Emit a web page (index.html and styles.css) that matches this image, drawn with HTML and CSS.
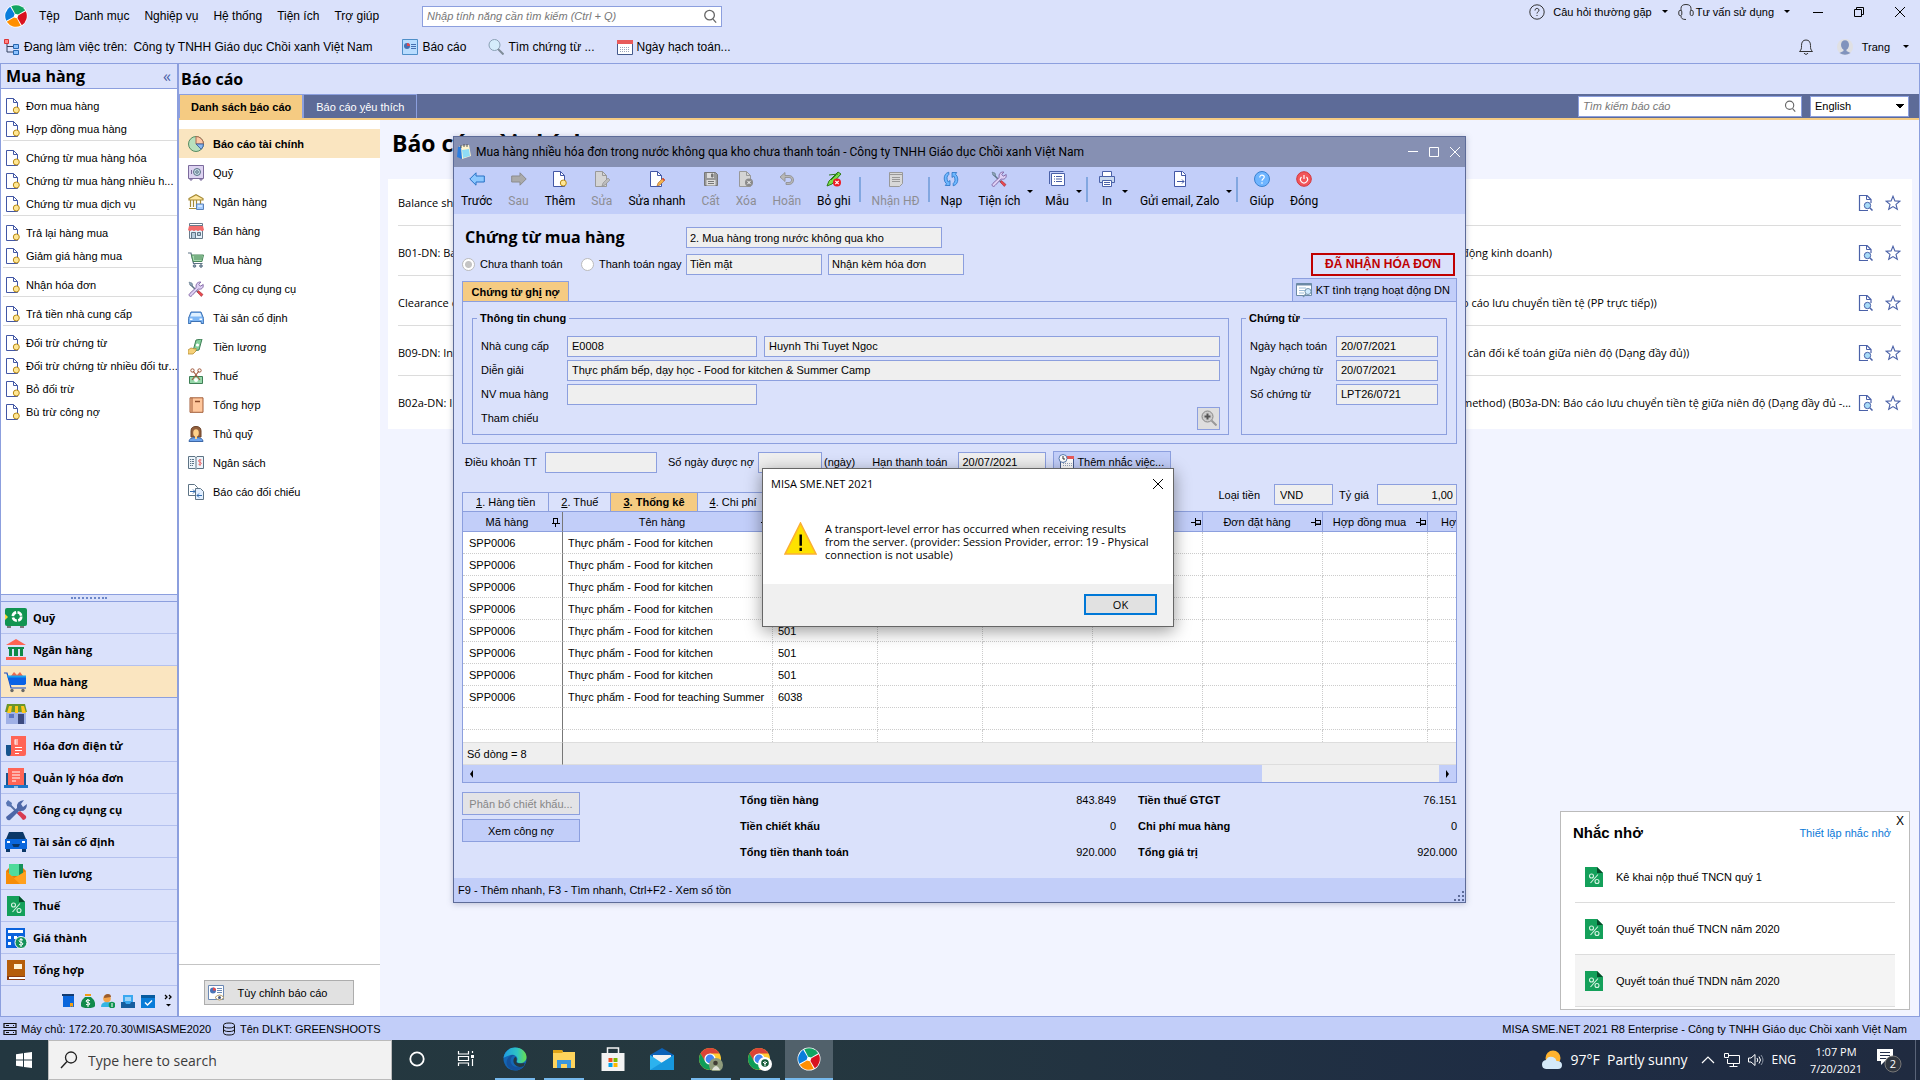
FILE: index.html
```
<!DOCTYPE html>
<html lang="vi">
<head>
    <meta charset="UTF-8">
    <meta name="viewport" content="width=device-width, initial-scale=1.0">
    <title>MISA SME.NET 2021</title>
    <link rel="stylesheet" href="styles.css">
</head>
<body>
    <!-- shared icons -->
    <svg class="sprite" aria-hidden="true">
        <symbol id="logo" viewBox="0 0 24 24">
            <circle cx="12" cy="12" r="11.5" fill="#fff"/>
            <path d="M4.5 4.2A11 11 0 0 1 19 3.6L13.5 10L10.5 10Z" fill="#12a563" transform="rotate(18 12 12)"/>
            <path d="M4.5 4.2A11 11 0 0 1 19 3.6L13.5 10L10.5 10Z" fill="#d9121f" transform="rotate(108 12 12)"/>
            <path d="M4.5 4.2A11 11 0 0 1 19 3.6L13.5 10L10.5 10Z" fill="#ff8f00" transform="rotate(198 12 12)"/>
            <path d="M4.5 4.2A11 11 0 0 1 19 3.6L13.5 10L10.5 10Z" fill="#0a7ddc" transform="rotate(288 12 12)"/>
        </symbol>
        <symbol id="search" viewBox="0 0 16 16"><g fill="none" stroke="#666" stroke-width="1.5"><circle cx="7.5" cy="7" r="5.5"/><path d="M11.5 11.5L15 15.5"/></g></symbol>
        <symbol id="tree" viewBox="0 0 16 16"><path d="M3 4V13H9M3 7.500H9" fill="none" stroke="#33415f"/><path d="M.5.5h4v4h-4z" fill="#ff8585" stroke="#d33"/><path d="M9.500 5.500h5v4h-5zM9.500 11.500h5v4h-5z" fill="#8cc2ff" stroke="#2767b0"/></symbol>
        <symbol id="report" viewBox="0 0 16 16"><path d="M.5.5h15v15H.5z" fill="#b9ddff" stroke="#4f8fc8"/><circle cx="5" cy="7" r="3" fill="#466fb0"/><path d="M5 4a3 3 0 0 1 3 3H5z" fill="#e5474b"/><path d="M9 5.500h5M9 7.500h5M9 9.500h5" stroke="#466fb0"/></symbol>
        <symbol id="find" viewBox="0 0 16 16"><circle cx="6.500" cy="6" r="5.500" fill="#d5ecfb" stroke="#8aa0b4"/><path d="M10 10l5.500 5.500" stroke="#7f8c99" stroke-width="2"/></symbol>
        <symbol id="cal" viewBox="0 0 16 16"><path d="M.5 1.500h15v14H.5z" fill="#fff" stroke="#445a8c"/><path d="M0 1h16v4H0z" fill="#e85a5a"/><path d="M3 8.500h10M3 10.500h10M3 12.500h10" stroke="#9aa5bd" stroke-dasharray="1 1"/></symbol>
        <symbol id="doc" viewBox="0 0 16 16"><path d="M1.500.5h7l4 4v11h-11z" fill="#fff" stroke="#4257a5"/><path d="M8.500.5v4h4" fill="none" stroke="#4257a5"/><circle cx="11.300" cy="12" r="3" fill="#ffe794" stroke="#b98a16"/></symbol>
        <symbol id="docedit" viewBox="0 0 16 16"><path d="M1.500.5h7l4 4v11h-11z" fill="#fff" stroke="#4257a5"/><path d="M8.500.5v4h4" fill="none" stroke="#4257a5"/><path d="M8 15l1-3 5-5 2 2-5 5z" fill="#f2b24c" stroke="#a8652b" stroke-width=".6"/><path d="M13 8l1-1 2 2-1 1z" fill="#d7403c"/></symbol>
        <symbol id="docgrey" viewBox="0 0 16 16"><path d="M1.500.5h7l4 4v11h-11z" fill="#d4d4d4" stroke="#999"/><path d="M8.500.5v4h4" fill="none" stroke="#999"/><path d="M8 15l1-3 5-5 2 2-5 5z" fill="#bbb" stroke="#8b8b8b" stroke-width=".6"/></symbol>
        <symbol id="docdel" viewBox="0 0 16 16"><path d="M1.500.5h7l4 4v11h-11z" fill="#d4d4d4" stroke="#999"/><path d="M8.500.5v4h4" fill="none" stroke="#999"/><circle cx="11" cy="11.500" r="4" fill="#8a8a8a"/><path d="M9.300 9.800l3.400 3.400M12.700 9.800l-3.400 3.400" stroke="#fff"/></symbol>
        <symbol id="docfind" viewBox="0 0 16 16"><path d="M13 8V4.500l-4-4H1.500v15H10" fill="#fff" stroke="#4a61a8" stroke-width="1.200"/><path d="M8.500.5v4h4.500" fill="none" stroke="#4a61a8"/><circle cx="9.500" cy="10.500" r="3.200" fill="#a9dcf7" stroke="#4a61a8"/><path d="M12 13l2.500 2.500" stroke="#4a61a8" stroke-width="1.500"/></symbol>
        <symbol id="star" viewBox="0 0 16 16"><path d="M8 1.200l1.900 4.700 5 .3-3.900 3.200 1.300 4.900L8 11.600l-4.300 2.700L5 9.400 1.100 6.200l5-.3z" fill="#fff" stroke="#4a61a8" stroke-width="1.100"/></symbol>
        <symbol id="arrow" viewBox="0 0 8 8"><path d="M1 2h6L4 5z" fill="#000"/></symbol>
        <symbol id="pin" viewBox="0 0 10 10"><path d="M2.500 1v5M6.500 1v5M2 1.500h5M1 6.500h8M4.500 6v4" fill="none" stroke="#000"/><path d="M6 1h1v5H6z"/></symbol>
        <symbol id="pinside" viewBox="0 0 10 10"><path d="M0 5.500h4M4.500 1v8M5 3.500h5M9.500 3v5M5 7.500h5" fill="none" stroke="#000"/><path d="M5 6.500h4v1H5z"/></symbol>
        <symbol id="tax" viewBox="0 0 18 20"><path d="M0 0h12l6 6v14H0z" fill="#14a05a"/><path d="M12 0l6 6h-6z" fill="#064d2a"/><g fill="none" stroke="#d8f3e3" stroke-width="1.100"><circle cx="6.500" cy="9" r="2"/><circle cx="12" cy="14.500" r="2"/><path d="M13 7.500L5.500 16"/></g></symbol>
        <symbol id="tools" viewBox="0 0 16 16"><path d="M2 3l9 9" stroke="#5d7385" stroke-width="1.500"/><path d="M1 1l3 1 .8 2L4 5l-2-.8z" fill="#8aa2b5" stroke="#5d7385" stroke-width=".5"/><path d="M10.500 9.500l4.500 4-1.700 2-4-4.300z" fill="#e8494e" stroke="#a52b35" stroke-width=".6"/><path d="M2 15.300c-1.500-.8-1.200-2 0-3L8.200 6.500C7.500 3 9.500.8 12.800 1L10.800 3.500l1.500 1.700 2.900-1.700c.5 3.500-1.700 5.300-5 4.500L4 14.500c-.7.8-1.400 1.200-2 .8z" fill="#ded0f4" stroke="#7b5f9f" stroke-width=".9"/></symbol>
        <symbol id="car" viewBox="0 0 16 16"><path d="M3 2h10l2 5 .7 1.500v5h-2.500v-2H2.800v2H.3v-5L1 7z" fill="#7eb7f5" stroke="#2f65ac" stroke-width=".9"/><path d="M3.700 3h8.600l1.300 3.500H2.400z" fill="#dff0ff"/><path d="M2 8.500h2.500v1.500H2zM11.500 8.500H14v1.500h-2.500z" fill="#fff"/></symbol>
        <symbol id="warning" viewBox="0 0 32 32"><path d="M16 1l15 30H1z" fill="#fde100" stroke="#fbb034" stroke-width="1.500"/><path d="M15 12h2.400v11H15zM15 25h2.400v3H15z"/></symbol>
    </svg>

    <header class="topbar">
        <div class="toprow">
            <svg class="logo"><use href="#logo"/></svg>
            <nav class="menu">
                <a href="#">Tệp</a><a href="#">Danh mục</a><a href="#">Nghiệp vụ</a><a href="#">Hệ thống</a><a href="#">Tiện ích</a><a href="#">Trợ giúp</a>
            </nav>
            <div class="searchbox main-search">
                <input type="text" placeholder="Nhập tính năng cần tìm kiếm (Ctrl + Q)" aria-label="Tìm tính năng">
                <svg class="i14"><use href="#search"/></svg>
            </div>
            <div class="help-links">
                <svg class="i16" viewBox="0 0 16 16"><g fill="none" stroke="#333"><circle cx="8" cy="8" r="7.200"/><path d="M6 6.500c0-3 4-2.500 4-.3C10 7.800 8 7.700 8 9.500M8 11v1"/></g></svg>
                <a href="#">Câu hỏi thường gặp</a><svg class="i8"><use href="#arrow"/></svg>
                <svg class="i16 headset" viewBox="0 0 16 16"><g fill="none" stroke="#333"><path d="M3 7V4.500C3 2 4.500.5 8 .5s5 1.500 5 4V7"/><rect x=".8" y="6.500" width="3" height="5" rx="1.300"/><rect x="12.200" y="6.500" width="3" height="5" rx="1.300"/><path d="M3 12c0 2.500 1.500 3.500 5 3.500"/></g></svg>
                <a href="#">Tư vấn sử dụng</a><svg class="i8"><use href="#arrow"/></svg>
            </div>
            <div class="window-buttons">
                <button aria-label="Thu nhỏ"><svg class="i10" viewBox="0 0 10 10"><path d="M0 5.500h10" stroke="#000"/></svg></button>
                <button aria-label="Khôi phục"><svg class="i10" viewBox="0 0 10 10"><path d="M.5 2.500h7v7h-7zM2.500 2.500v-2h7v7h-2" fill="none" stroke="#000"/></svg></button>
                <button aria-label="Đóng"><svg class="i10" viewBox="0 0 10 10"><path d="M0 0l10 10M10 0L0 10" stroke="#000"/></svg></button>
            </div>
        </div>
        <div class="toprow second">
            <svg class="i16"><use href="#tree"/></svg>
            <span class="working">Đang làm việc trên:</span><span class="company">Công ty TNHH Giáo dục Chồi xanh Việt Nam</span>
            <a href="#" class="quick"><svg class="i16"><use href="#report"/></svg>Báo cáo</a>
            <a href="#" class="quick"><svg class="i16"><use href="#find"/></svg>Tìm chứng từ ...</a>
            <a href="#" class="quick"><svg class="i16"><use href="#cal"/></svg>Ngày hạch toán...</a>
            <div class="user">
                <svg class="i16" viewBox="0 0 16 16"><path d="M1.500 12.500c2-2 2-3 2-6C3.500 3 5 1 8 1s4.500 2 4.500 5.500c0 3 0 4 2 6zM6 14c1 1.800 3 1.800 4 0" fill="none" stroke="#333"/></svg>
                <svg class="i16" viewBox="0 0 16 16"><circle cx="8" cy="8" r="8" fill="#e0e0e3"/><ellipse cx="8" cy="6" rx="4" ry="4.800" fill="#8193bd"/><path d="M6.500 9h3v3l4 2q-5.500 3.500-11 0l4-2z" fill="#8193bd"/></svg>
                <span>Trang</span><svg class="i8"><use href="#arrow"/></svg>
            </div>
        </div>
    </header>

    <main class="workspace">
        <aside class="sidebar">
            <h2 class="side-title">Mua hàng <button aria-label="Thu gọn">«</button></h2>
            <div class="side-links">
                <div class="group">
                    <a href="#"><svg class="i16"><use href="#doc"/></svg>Đơn mua hàng</a>
                    <a href="#"><svg class="i16"><use href="#doc"/></svg>Hợp đồng mua hàng</a>
                </div>
                <div class="group">
                    <a href="#"><svg class="i16"><use href="#doc"/></svg>Chứng từ mua hàng hóa</a>
                    <a href="#"><svg class="i16"><use href="#doc"/></svg>Chứng từ mua hàng nhiều h...</a>
                    <a href="#"><svg class="i16"><use href="#doc"/></svg>Chứng từ mua dịch vụ</a>
                </div>
                <div class="group">
                    <a href="#"><svg class="i16"><use href="#doc"/></svg>Trả lại hàng mua</a>
                    <a href="#"><svg class="i16"><use href="#doc"/></svg>Giảm giá hàng mua</a>
                </div>
                <div class="group">
                    <a href="#"><svg class="i16"><use href="#doc"/></svg>Nhận hóa đơn</a>
                </div>
                <div class="group">
                    <a href="#"><svg class="i16"><use href="#doc"/></svg>Trả tiền nhà cung cấp</a>
                </div>
                <div class="group">
                    <a href="#"><svg class="i16"><use href="#doc"/></svg>Đối trừ chứng từ</a>
                    <a href="#"><svg class="i16"><use href="#doc"/></svg>Đối trừ chứng từ nhiều đối tư...</a>
                    <a href="#"><svg class="i16"><use href="#doc"/></svg>Bỏ đối trừ</a>
                    <a href="#"><svg class="i16"><use href="#doc"/></svg>Bù trừ công nợ</a>
                </div>
            </div>
            <div class="splitter"><span></span></div>
            <nav class="modules">
                <a href="#"><svg viewBox="0 0 24 22"><path d="M3 18h4v3H3zM16 18h4v3h-4z" fill="#777"/><rect x="1" y="1" width="22" height="18" rx="2" fill="#119451"/><path d="M1 7l3 3-3 3z" fill="#ffd83b"/><circle cx="13" cy="9.500" r="4.200" fill="none" stroke="#fff" stroke-width="2.600" stroke-dasharray="5.200 1.400"/></svg>Quỹ</a>
                <a href="#"><svg viewBox="0 0 24 22"><path d="M12 0l10 6H2zM2 18h20v3H2z" fill="#ff6352"/><path d="M4 8h16v2h-1v7h-3v-7h-2v7h-4v-7H8v7H5v-7H4z" fill="#0e8a48"/></svg>Ngân hàng</a>
                <a href="#" class="active"><svg viewBox="0 0 24 22"><path d="M7 5l3-4 3 3 3-3 3 4z" fill="#ec6a4f"/><path d="M0 2h3l4 15h15" fill="none" stroke="#1a4ec0" stroke-width="1.200"/><path d="M3.500 5H22v8l-1.500 1H6.500z" fill="#0a62e6"/><path d="M3 4.500h19v2H3.600z" fill="#18a0ee"/><circle cx="8" cy="19.500" r="1.700" fill="#666"/><circle cx="19" cy="19.500" r="1.700" fill="#666"/></svg>Mua hàng</a>
                <a href="#"><svg viewBox="0 0 24 22"><path d="M2 8h20v13H2z" fill="#9fb0e6"/><path d="M14 11h6v10h-6z" fill="#3b4a80"/><path d="M5 11h5v4H5z" fill="#5c76c5"/><path d="M3 1h18l2 8H1z" fill="#6b962b"/><path d="M5 3h3L7 10H3zM11 3h3v7h-3zM17 3h3l2 7h-4z" fill="#ffc61a"/></svg>Bán hàng</a>
                <a href="#"><svg viewBox="0 0 24 22"><path d="M2 10h6v11H4q-2 0-2-3z" fill="#17558e"/><path d="M7 1h15v18q0 2-2 2H5q2 0 2-3z" fill="#ff6455"/><path d="M11 5h3M11 7h3M11 9h3M11 4.500v5M11 12.500h7M11 15.500h7M11 18.500h4" stroke="#fff" fill="none"/></svg>Hóa đơn điện tử</a>
                <a href="#"><svg viewBox="0 0 24 22"><path d="M2 6h20v13H2z" fill="#17558e"/><path d="M0 18h24v3H0z" fill="#1b76c9"/><path d="M4 1h16v17H4z" fill="#ff6455"/><path d="M8 5h8M8 8h8M8 11h8M8 14h4M10 20h4" stroke="#fff"/></svg>Quản lý hóa đơn</a>
                <a href="#"><svg viewBox="0 0 24 22"><path d="M3 3l13 13" stroke="#5670a6" stroke-width="2"/><path d="M2 4l2-3 4 3-1 4-4-1z" fill="#5a78b5"/><path d="M13 14l3-2 6 5q1 3-3 4z" fill="#d83b52"/><path d="M2 18L13 9q-1-7 7-8l-3 4 2 3 4-3q0 8-8 7L6 21q-3 1-4-3z" fill="#4d67a8"/></svg>Công cụ dụng cụ</a>
                <a href="#"><svg viewBox="0 0 24 22"><path d="M5 1h14l3 7H2z" fill="#0b3767"/><path d="M1 8h22v10H1z" fill="#0a66dc"/><path d="M2 18h4v3H2zM18 18h4v3h-4z" fill="#0b3767"/><path d="M8 13h8l-1.500 3h-5z" fill="#0b3767"/><path d="M3 10h3v2H3zM18 10h3v2h-3z" fill="#fff"/></svg>Tài sản cố định</a>
                <a href="#"><svg viewBox="0 0 24 22"><path d="M2 8l3-3h14l3 3v12H2z" fill="#e37b0b"/><path d="M5 1h14v12H5z" fill="#4fdb9c"/><path d="M15 1h4v12h-4z" fill="#15915a"/><path d="M2 8l8 7 12-7v13H2z" fill="#ffa11f"/><path d="M2 8l14 13H2z" fill="#f68d08"/></svg>Tiền lương</a>
                <a href="#"><svg viewBox="-3 -1 24 22"><use href="#tax" width="18" height="20"/></svg>Thuế</a>
                <a href="#"><svg viewBox="0 0 24 22"><path d="M2 1h19v20H2z" fill="#0a62dc"/><path d="M4 3h15v3H4zM4 9h3v3H4zM10 9h3v3h-3zM4 15h3v3H4z" fill="#fff"/><circle cx="17" cy="15.500" r="6" fill="#14915a" stroke="#fff"/><path d="M19 13q-4-1.500-4 .7c0 2 4 1.300 4 3.300q-1 2-4 .5M17 11v9" fill="none" stroke="#fff"/></svg>Giá thành</a>
                <a href="#"><svg viewBox="0 0 24 22"><path d="M3 1h18v20H3z" fill="#8b3d12"/><path d="M3 1h18v16H3z" fill="#b55e0b"/><path d="M10 5h8v5h-8z" fill="#fff3d7"/><path d="M5 18h16v2H5z" fill="#fff"/></svg>Tổng hợp</a>
            </nav>
            <div class="module-more">
                <svg viewBox="0 0 14 14"><path d="M2 1h11v12H2z" fill="#0a66dc"/><path d="M1 0h12v2H1z" fill="#123a70"/><path d="M9 9h3v4l-1.500-1L9 13z" fill="#f3a013"/></svg>
                <svg viewBox="0 0 14 14"><path d="M4 0h6v2H4z" fill="#f39b13"/><path d="M4 3h6q5 4 4 9-1 2-7 2t-7-2q-1-5 4-9z" fill="#118a4a"/><path d="M9 6.500q-4-1.500-4 .5c0 2 4 1.300 4 3q-1 1.500-4 .5M7 5v8" fill="none" stroke="#fff"/></svg>
                <svg viewBox="0 0 14 14"><path d="M0 13q0-5 6-5t5 5z" fill="#33b4e4"/><circle cx="6" cy="4.500" r="3.800" fill="#f3a44a"/><path d="M3 4q0-4 4-4 3 0 3 3z" fill="#9a5c2d"/><circle cx="11" cy="11" r="3.300" fill="#119451"/><path d="M11 9v4" stroke="#fff"/></svg>
                <svg viewBox="0 0 14 14"><path d="M2 1h10v10H2z" fill="#3aa8f0"/><path d="M0 8h4l1 2h4l1-2h4v6H0z" fill="#155d9e"/><path d="M4 4h6M4 6h6" stroke="#fff"/></svg>
                <svg viewBox="0 0 14 14"><path d="M0 1h14v13H0z" fill="#087cd8"/><path d="M0 1h14v3H0z" fill="#075b9f"/><path d="M4 8.500l2.500 2.500L11 6.500" fill="none" stroke="#fff" stroke-width="1.500"/></svg>
                <svg viewBox="0 0 14 14"><path d="M4 1l2 2-2 2M8 1l2 2-2 2" fill="none" stroke="#000" stroke-width="1.300"/><path d="M5 10h5l-2.500 2.500z"/></svg>
            </div>
        </aside>

        <section class="reports">
            <h2 class="page-title">Báo cáo</h2>
            <div class="tabbar">
                <button class="tab active">Danh sách <u>b</u>áo cáo</button>
                <button class="tab">Báo cáo <u>y</u>êu thích</button>
                <div class="searchbox report-search">
                    <input type="text" placeholder="Tìm kiếm báo cáo" aria-label="Tìm kiếm báo cáo">
                    <svg class="i12"><use href="#search"/></svg>
                </div>
                <select class="lang" aria-label="Ngôn ngữ"><option>English</option></select>
            </div>
            <div class="report-area">
                <div class="categories">
                    <nav>
                        <a href="#" class="active"><svg viewBox="0 0 16 16"><circle cx="8" cy="8" r="7.500" fill="#b8e0bd" stroke="#558a62"/><path d="M8 8V.5A7.500 7.500 0 0 1 15.500 8z" fill="#ffc9a6" stroke="#a86a50"/><path d="M8 8h7.500a7.500 7.500 0 0 1-2.300 5.300z" fill="#8bb8f0" stroke="#42659d"/></svg>Báo cáo tài chính</a>
                        <a href="#"><svg viewBox="0 0 16 16"><path d="M.5.5h15v13H.5zM2 14v1h2v-1M12 14v1h2v-1" fill="#ddd3f1" stroke="#7b6a9c"/><circle cx="9" cy="7" r="3.500" fill="#c8dde8" stroke="#5a7185"/><circle cx="9" cy="7" r="1.300" fill="none" stroke="#5a7185"/><path d="M3.500 5v4" stroke="#7b6a9c"/></svg>Quỹ</a>
                        <a href="#"><svg viewBox="0 0 16 16"><path d="M1 4.500L8 .8l7 3.700V6H1zM2.500 6v7M5.500 6v7M8.500 6v7M12.500 6v7M1 14.500h14" fill="#ffe8a0" stroke="#a68a35" stroke-width="1.200"/><path d="M8.500 10h7v5.500h-7z" fill="#a5ccff" stroke="#5c83b9"/><path d="M10 12h4" stroke="#fff"/></svg>Ngân hàng</a>
                        <a href="#"><svg viewBox="0 0 16 16"><path d="M1.500 2v13.500h13V2z" fill="#e8f2fb" stroke="#697b8b"/><path d="M1.500.5h13v2h-13z" fill="#fff" stroke="#697b8b"/><path d="M1 3h14l1 4q-2 2-4 0-2 2-4 0-2 2-4 0-2 2-4 0z" fill="#f26b6b"/><path d="M3.500 9.500h4v6h-4zM9.500 9.500h3v3h-3z" fill="#b6cbdb" stroke="#5f7485"/></svg>Bán hàng</a>
                        <a href="#"><svg viewBox="0 0 16 16"><path d="M0 1h3l2.500 10.500h9" fill="none" stroke="#5f7485" stroke-width="1.200"/><path d="M3.500 3h12l-1.500 6.500H5z" fill="#a7dbaf" stroke="#4a875b"/><path d="M7 4v4M9 4v4M11 4v4M13 4v4" stroke="#4a875b"/><circle cx="6.500" cy="14" r="1.300" fill="#8b9eaf" stroke="#5f7485"/><circle cx="13" cy="14" r="1.300" fill="#8b9eaf" stroke="#5f7485"/></svg>Mua hàng</a>
                        <a href="#"><svg><use href="#tools"/></svg>Công cụ dụng cụ</a>
                        <a href="#"><svg><use href="#car"/></svg>Tài sản cố định</a>
                        <a href="#"><svg viewBox="0 0 16 16"><path d="M8 1l6-1-3 11-6 1z" fill="#84cf9b" stroke="#3f7f56"/><circle cx="9.500" cy="6" r="1.600" fill="#fff"/><path d="M0 11l3-2 4 1 1-1v3l-3 3H0z" fill="#f6d179" stroke="#b98f36" stroke-width=".8"/></svg>Tiền lương</a>
                        <a href="#"><svg viewBox="0 0 16 16"><path d="M1.500 8.500h13v7h-13z" fill="#96d8aa" stroke="#3f7f56"/><circle cx="8" cy="12" r="2" fill="#fff"/><path d="M5 3l7 9M11 3l-7 9" stroke="#a25a3e" stroke-width="1.200"/><circle cx="4.500" cy="2.500" r="1.700" fill="none" stroke="#a25a3e"/><circle cx="11.500" cy="2.500" r="1.700" fill="none" stroke="#a25a3e"/></svg>Thuế</a>
                        <a href="#"><svg viewBox="0 0 16 16"><path d="M2 .8h13v14.500H2zM4 .8v14" fill="#ffc79c" stroke="#a25d38"/><path d="M7 4.500h5" stroke="#8c4b2a" stroke-width="1.500"/></svg>Tổng hợp</a>
                        <a href="#"><svg viewBox="0 0 16 16"><path d="M3 11V5q0-4.500 5-4.500T13 5v6z" fill="#94603d" stroke="#6c4328"/><path d="M1 15.500q0-4 7-4t7 4z" fill="#6da4ec" stroke="#3d68a8"/><ellipse cx="8" cy="7" rx="2.800" ry="3.700" fill="#ffd18a"/><path d="M7 10h2v3H7z" fill="#ffd18a"/></svg>Thủ quỹ</a>
                        <a href="#"><svg viewBox="0 0 16 16"><path d="M.5 1.500H7l1 1 1-1h6.500v12H9l-1 1-1-1H.5zM8 2v12" fill="#eef5fb" stroke="#5d7385"/><path d="M2 4.500h4M2 6.500h4M2 8.500h4M2 10.500h3" stroke="#5d7385" stroke-dasharray="1 .7 4"/><path d="M13.500 5q-3-1-3 1c0 1.500 3 1 3 2.500q-.5 1.500-3 .8M12 4v7" fill="none" stroke="#ed6b6b"/></svg>Ngân sách</a>
                        <a href="#"><svg viewBox="0 0 16 16"><path d="M.5.5h6l3 3v8h-9z" fill="#fff" stroke="#5d7385"/><path d="M7.500 4.500h5l3 3v8h-8z" fill="#e2efff" stroke="#5d7385"/><path d="M2 7.500h5M5 5.500l2 2-2 2M14 11.500h-5M11 9.500l-2 2 2 2" fill="none" stroke="#326caf"/></svg>Báo cáo đối chiếu</a>
                    </nav>
                    <div class="customize">
                        <button><svg class="i16" viewBox="0 0 16 16"><path d="M.5.5h15v14H.5z" fill="#fff" stroke="#6b89b5"/><circle cx="5" cy="5.500" r="3" fill="#4b74b8"/><path d="M5 2.500a3 3 0 0 1 3 3H5z" fill="#e5474b"/><path d="M9 3.500h5M9 5.500h5M9 7.500h5" stroke="#6b89b5"/><path d="M7 12.500q4.500-5 9 0-4.500 5-9 0z" fill="#fff" stroke="#b59a62"/><circle cx="11.500" cy="12.500" r="1.500" fill="#4a5a80"/></svg><span>Tùy chỉnh báo cáo</span></button>
                    </div>
                </div>
                <div class="report-content">
                    <h1>Báo cáo tài chính</h1>
                    <ul class="report-list">
                        <li><span class="en">Balance sheet</span><span class="vi"></span><svg><use href="#docfind"/></svg><svg><use href="#star"/></svg></li>
                        <li><span class="en">B01-DN: Balance sheet</span><span class="vi">động kinh doanh)</span><svg><use href="#docfind"/></svg><svg><use href="#star"/></svg></li>
                        <li><span class="en">Clearance of</span><span class="vi">o cáo lưu chuyển tiền tệ (PP trực tiếp))</span><svg><use href="#docfind"/></svg><svg><use href="#star"/></svg></li>
                        <li><span class="en">B09-DN: Interim</span><span class="vi">i cân đối kế toán giữa niên độ (Dạng đầy đủ))</span><svg><use href="#docfind"/></svg><svg><use href="#star"/></svg></li>
                        <li><span class="en">B02a-DN: Interim</span><span class="vi">method) (B03a-DN: Báo cáo lưu chuyển tiền tệ giữa niên độ (Dạng đầy đủ -...</span><svg><use href="#docfind"/></svg><svg><use href="#star"/></svg></li>
                    </ul>
                </div>
            </div>
        </section>
    </main>

    <footer class="app-status">
        <svg viewBox="0 0 14 14"><path d="M1 1.500h12v4H1zM1 8.500h12v4H1zM3 3.500h3M3 10.500h3M10 3.500h1M10 10.500h1" fill="none" stroke="#111" stroke-width="1.200"/></svg>
        <span class="server">Máy chủ: 172.20.70.30\MISASME2020</span>
        <svg viewBox="0 0 14 14"><path d="M1.500 3.500q0-2.500 5.500-2.500t5.500 2.500T7 6 1.500 3.500v7Q1.500 13 7 13t5.500-2.500v-7M1.500 7Q1.500 9.500 7 9.500T12.500 7" fill="none" stroke="#111"/></svg>
        <span>Tên DLKT: GREENSHOOTS</span>
        <span class="edition">MISA SME.NET 2021 R8 Enterprise - Công ty TNHH Giáo dục Chồi xanh Việt Nam</span>
    </footer>

    <div class="taskbar">
        <button class="start" aria-label="Start"><svg class="i16" viewBox="0 0 16 16"><path d="M0 2.200L7 1.200v6.300H0zM8 1l8-1v7.500H8zM0 8.500h7v6.300l-7-1zM8 8.500h8V16l-8-1z" fill="#fff"/></svg></button>
        <label class="task-search"><svg viewBox="0 0 18 18"><circle cx="11" cy="6.500" r="5.500" fill="none" stroke="#222" stroke-width="1.300"/><path d="M7 10.500L1 17" stroke="#222" stroke-width="1.400"/></svg><input type="text" placeholder="Type here to search" aria-label="Type here to search"></label>
        <div class="apps">
            <button aria-label="Cortana"><svg viewBox="0 0 24 24"><circle cx="12" cy="12" r="6.700" fill="none" stroke="#fff" stroke-width="1.800"/></svg></button>
            <button aria-label="Task View"><svg viewBox="0 0 24 24"><path d="M4.500 4v3h10V4M4.500 19v-3h10v3M4.500 9.500h10v4h-10zM18.500 4v2M18.500 12v7" fill="none" stroke="#fff" stroke-width="1.200"/><path d="M17 8h3v3h-3z" fill="#fff"/></svg></button>
            <button class="open" aria-label="Edge"><svg viewBox="0 0 24 24"><defs><linearGradient id="edge-g" x1="0" x2="1"><stop offset="0" stop-color="#1f9be0"/><stop offset=".6" stop-color="#2ec4c4"/><stop offset="1" stop-color="#6ae04b"/></linearGradient></defs><circle cx="12" cy="12" r="11.500" fill="#1466b4"/><path d="M.5 11C1.500 4 7 .5 12 .5c7 0 11.500 5 11.500 9.500 0 4-3 6-6 6-2.500 0-4-1-3.500-2 2-5-4-7.500-8-5.500-3 1-5 2-5.500 2.500z" fill="url(#edge-g)"/><path d="M13 8c-4 0-6.500 4-5 8 1.500 4 6 5 11 3 1.500-.8 2-.3 1 .7-4 4.500-11 5-15 0C2 16 4 9.500 9 8z" fill="#15519b"/><path d="M12.500 10c1.500 1 1.500 3 .8 4.500-.4 2 3.700 2.500 8.500 1.500l-1 3q-6 2.500-9-1.500c-2.500-3-1-7 .7-7.500z" fill="#253941"/></svg></button>
            <button class="open" aria-label="File Explorer"><svg viewBox="0 0 24 24"><path d="M1 3h9l1 2h12v16H1z" fill="#ffd45c"/><path d="M1 3h9l1 2-1 1H1z" fill="#e1a417"/><path d="M5 21v-8h14v8h-4v-4H9v4z" fill="#3a96dd"/></svg></button>
            <button aria-label="Microsoft Store"><svg viewBox="0 0 24 24"><path d="M6.500 7V1h11v6" fill="none" stroke="#f3f3f3" stroke-width="1.500"/><path d="M.5 6h23v18H.500z" fill="#f3f3f3"/><path d="M7.500 11h4v4h-4z" fill="#f25022"/><path d="M12.500 11h4v4h-4z" fill="#7fba00"/><path d="M7.500 16h4v4h-4z" fill="#00a4ef"/><path d="M12.500 16h4v4h-4z" fill="#ffb900"/></svg></button>
            <button aria-label="Mail"><svg viewBox="0 0 24 24"><path d="M0 8l12-7 12 7v15H0z" fill="#0c62b7"/><path d="M3 8h18v9H3z" fill="#f2f2f2"/><path d="M0 8l12 8 12-8v15H0z" fill="#2cb2ee"/><path d="M0 23L24 8v15z" fill="#1797dd"/></svg></button>
            <button class="open" aria-label="Chrome"><svg viewBox="0 0 24 24"><circle cx="11" cy="12" r="11" fill="#fc3"/><path d="M1.500 6.500A11 11 0 0 1 20.500 6.500H11L6 15z" fill="#db4437"/><path d="M1.500 6.500A11 11 0 0 0 11 23l4.500-8-9 0z" fill="#0f9d58"/><circle cx="11" cy="12" r="5" fill="#4285f4" stroke="#fff" stroke-width="1.200"/><circle cx="17" cy="18" r="7" fill="#8f9b7c"/><circle cx="16.500" cy="16" r="2.300" fill="#403d36"/><path d="M13 23q4-8 8 0z" fill="#dfe2d8"/></svg></button>
            <button class="open" aria-label="Chrome"><svg viewBox="0 0 24 24"><circle cx="11" cy="12" r="11" fill="#fc3"/><path d="M1.500 6.500A11 11 0 0 1 20.500 6.500H11L6 15z" fill="#db4437"/><path d="M1.500 6.500A11 11 0 0 0 11 23l4.500-8-9 0z" fill="#0f9d58"/><circle cx="11" cy="12" r="5" fill="#4285f4" stroke="#fff" stroke-width="1.200"/><circle cx="17" cy="17" r="7" fill="#fff"/><circle cx="17" cy="16" r="3.800" fill="#165c37"/><path d="M17 19v-5M17 17l-2-2M17 17l2-2" stroke="#fff"/></svg></button>
            <button class="open current" aria-label="MISA SME.NET"><svg viewBox="0 0 24 24"><use href="#logo"/></svg></button>
        </div>
        <div class="tray">
            <svg class="weather" viewBox="0 0 22 20"><circle cx="12" cy="8" r="7.500" fill="#ffb22e"/><path d="M5 19q-4-.5-4-4.500T5 10q2-4.500 7-3 3 1 3.500 4 5.500 0 5.500 4t-4 4z" fill="#d4e9f9"/></svg>
            <span class="forecast">97°F&nbsp; Partly sunny</span>
            <svg class="i16" viewBox="0 0 16 16"><path d="M2 11l6-6 6 6" fill="none" stroke="#fff" stroke-width="1.200"/></svg>
            <svg class="i16" viewBox="0 0 16 16"><path d="M5 3.500h10.500v8H3.500V7M9.500 11.500v3M5.500 14.500h8M.5 1.500h4v4h-4z" fill="none" stroke="#fff"/></svg>
            <svg class="i16" viewBox="0 0 16 16"><path d="M.5 6H3l4-3.500v11L3 10H.500z" fill="none" stroke="#fff"/><path d="M9 6q1.500 2 0 4M11 4.500q3 3.500 0 7" fill="none" stroke="#fff"/><path d="M13 3q4 5 0 10" fill="none" stroke="#8791a0"/></svg>
            <span class="ime">ENG</span>
            <span class="clock">1:07 PM<br>7/20/2021</span>
            <svg class="notice" viewBox="0 0 26 26"><path d="M1 2h16v12H9l-4 4v-4H1z" fill="#fff"/><path d="M4 5.500h10M4 8.500h10M4 11.500h6" stroke="#25304b"/><circle cx="17" cy="17" r="8" fill="#30363f" stroke="#777"/><text x="17" y="21" text-anchor="middle" class="count">2</text></svg>
        </div>
    </div>

    <!-- purchase voucher window -->
    <div class="window">
        <div class="titlebar">
            <svg class="i16" viewBox="0 0 16 16"><path d="M3 2l10-1 2 11-9 3z" fill="#fff6cf"/><path d="M2 3l3-1 1 13-5-2z" fill="#2b7de0"/><path d="M6 6l7-1 1 7-7 2z" fill="#8fdcf5"/><path d="M5 1v3M8 0v3M11 0v3" stroke="#555"/></svg>
            <span>Mua hàng nhiều hóa đơn trong nước không qua kho chưa thanh toán - Công ty TNHH Giáo dục Chồi xanh Việt Nam</span>
            <button aria-label="Thu nhỏ"><svg class="i10" viewBox="0 0 10 10"><path d="M0 4.500h10" stroke="#fff"/></svg></button>
            <button aria-label="Phóng to"><svg class="i10" viewBox="0 0 10 10"><path d="M.5.5h9v9h-9z" stroke="#fff" fill="none"/></svg></button>
            <button aria-label="Đóng"><svg class="i10" viewBox="0 0 10 10"><path d="M0 0l10 10M10 0L0 10" stroke="#fff"/></svg></button>
        </div>
        <div class="toolbar">
            <button><svg viewBox="0 0 16 16"><path d="M.8 8L7 1.800V5h8.300v6H7v3.200z" fill="#8cc8ff" stroke="#2671c4"/></svg>Trước</button>
            <button disabled><svg viewBox="0 0 16 16"><path d="M15.200 8L9 1.800V5H.700v6H9v3.200z" fill="#aaa" stroke="#8c8c8c"/></svg>Sau</button>
            <button><svg><use href="#doc"/></svg>Thêm</button>
            <button disabled><svg><use href="#docgrey"/></svg>Sửa</button>
            <button><svg><use href="#docedit"/></svg>Sửa nhanh</button>
            <button disabled><svg viewBox="0 0 16 16"><path d="M1.500 1.500h11l2 2v11h-13z" fill="#999" stroke="#777"/><path d="M4 2h7v5H4zM3.500 9h9v5.500h-9z" fill="#ddd"/><path d="M8.500 3h1.500v3H8.500zM5 10.500h6M5 12.500h6" stroke="#777" fill="#777"/></svg>Cất</button>
            <button disabled><svg><use href="#docdel"/></svg>Xóa</button>
            <button disabled><svg viewBox="0 0 16 16"><path d="M1 6l5-4.500V4.500h4c6 0 6 9 0 9H7v-2h3c3.500 0 3.500-5 0-5H6v4z" fill="#b8b8b8" stroke="#8c8c8c" stroke-width=".8"/></svg>Hoãn</button>
            <button><svg viewBox="0 0 16 16"><path d="M1 15l2-5L12 1l3 2-9 10z" fill="#7be046" stroke="#2f7a19"/><path d="M3 4l9-1M5 9l5-5" stroke="#2f7a19"/><circle cx="11" cy="11.500" r="4" fill="#ec1c24"/><path d="M9.300 9.800l3.400 3.400M12.700 9.800l-3.400 3.400" stroke="#fff" stroke-width="1.200"/></svg>Bỏ ghi</button>
            <i class="sep"></i>
            <button disabled><svg viewBox="0 0 16 16"><path d="M1.500 1.500h13v11l-3 3h-10z" fill="#d8d8d8" stroke="#999"/><path d="M1 3.500h14M4 6.500h8M4 8.500h8M4 10.500h8" stroke="#999"/></svg>Nhận HĐ</button>
            <i class="sep"></i>
            <button><svg viewBox="0 0 16 16"><path d="M5.800 1.200Q1 2.500 1.200 8q.2 3 2.300 4.800L2.300 14.500h4.700v-5L5.200 11Q2.500 6 5.800 3.500zM10.200 14.800q4.800-1.300 4.600-6.800-.2-3-2.300-4.800L13.700 1.500H9v5L10.800 5q2.700 5-.6 7.500z" fill="#6fb8ff" stroke="#2671c4" stroke-width=".8"/></svg>Nạp</button>
            <button><svg><use href="#tools"/></svg>Tiện ích</button>
            <svg class="drop"><use href="#arrow"/></svg>
            <button><svg viewBox="0 0 16 16"><path d="M.5 13V.5h14" fill="none" stroke="#4a61a8"/><path d="M2.500 2.500h13v12h-13z" fill="#fff" stroke="#4a61a8"/><path d="M5 5.500h1M7 5.500h6M5 8h1M7 8h6M5 10.500h1M7 10.500h6" stroke="#4a61a8"/></svg>Mẫu</button>
            <svg class="drop"><use href="#arrow"/></svg>
            <i class="sep"></i>
            <button><svg viewBox="0 0 16 16"><path d="M.5 5.500h15v6H.500z" fill="#c9d9ef" stroke="#4a61a8"/><path d="M3.500.5h9v5h-9zM3.500 9.500h9v6h-9z" fill="#fff" stroke="#4a61a8"/><path d="M5 11.500h6M5 13.500h6" stroke="#4a61a8"/></svg>In</button>
            <svg class="drop"><use href="#arrow"/></svg>
            <button><svg viewBox="0 0 16 16"><path d="M2.500.5h8l3 3v12h-11z" fill="#fff" stroke="#4257a5"/><path d="M9.500.5v4h4M5 10.500h7M10 8.500l2 2-2 2" fill="none" stroke="#4257a5"/></svg>Gửi email, Zalo</button>
            <svg class="drop"><use href="#arrow"/></svg>
            <i class="sep"></i>
            <button><svg viewBox="0 0 16 16"><circle cx="8" cy="8" r="7.500" fill="#6fb5ff" stroke="#3b82d0"/><path d="M5.800 6.500c0-3.500 4.500-2.800 4.500-.4C10.300 7.800 8 7.700 8 9.800M8 11.300v1.400" fill="none" stroke="#fff" stroke-width="1.200"/></svg>Giúp</button>
            <button><svg viewBox="0 0 16 16"><circle cx="8" cy="8" r="7.300" fill="#f2555a" stroke="#d2373c"/><path d="M5.500 6a3.500 3.500 0 1 0 5 0M8 4v4" fill="none" stroke="#fff" stroke-width="1.200"/></svg>Đóng</button>
        </div>

        <div class="voucher">
            <div class="voucher-head">
                <div class="headline">
                    <h2>Chứng từ mua hàng</h2>
                    <input class="field kind" type="text" value="2. Mua hàng trong nước không qua kho" aria-label="Loại chứng từ" readonly>
                </div>
                <div class="payline">
                    <label class="radio"><input type="radio" name="pay" checked>Chưa thanh toán</label>
                    <label class="radio"><input type="radio" name="pay">Thanh toán ngay</label>
                    <input class="field w136" type="text" value="Tiền mặt" aria-label="Hình thức" readonly>
                    <input class="field w136" type="text" value="Nhận kèm hóa đơn" aria-label="Hóa đơn" readonly>
                    <strong class="stamp">ĐÃ NHẬN HÓA ĐƠN</strong>
                </div>
            </div>
            <div class="panel-tabs">
                <button class="tab-debit">Chứng từ gh<u>i</u> nợ</button>
                <button class="check"><svg class="i16" viewBox="0 0 16 16"><path d="M.5 1.500h15v12H.500z" fill="#fff" stroke="#6b89a5"/><path d="M.5 1.500h15v2H.500z" fill="#6b89a5"/><path d="M3 6h7M3 8.500h6M3 11h5" stroke="#9bbcd8"/><circle cx="12" cy="9.500" r="3" fill="#d0ebff" stroke="#7796ad"/><path d="M10 12l-3 3" stroke="#7796ad" stroke-width="1.500"/></svg>KT tình trạng hoạt động DN</button>
            </div>
            <div class="panel">
                <fieldset class="general">
                    <legend>Thông tin chung</legend>
                    <div class="row"><label for="supplier">Nhà cung cấp</label><input id="supplier" class="field w190" type="text" value="E0008" readonly><input class="field grow second-field" type="text" value="Huynh Thi Tuyet Ngoc" aria-label="Tên nhà cung cấp" readonly></div>
                    <div class="row"><label for="memo">Diễn giải</label><input id="memo" class="field grow" type="text" value="Thực phẩm bếp, dạy học - Food for kitchen &amp; Summer Camp" readonly></div>
                    <div class="row"><label for="buyer">NV mua hàng</label><input id="buyer" class="field w190" type="text" readonly></div>
                    <div class="row"><span class="lbl">Tham chiếu</span><button class="zoom" aria-label="Tìm tham chiếu"><svg class="i16" viewBox="0 0 16 16"><circle cx="6.500" cy="6.500" r="5.500" fill="#ccc" stroke="#888"/><path d="M3.500 6.500h6M6.500 3.500v6" stroke="#555" stroke-width="2"/><path d="M10.500 10.500l5 5" stroke="#999" stroke-width="2"/></svg></button></div>
                </fieldset>
                <fieldset class="docinfo">
                    <legend>Chứng từ</legend>
                    <div class="row"><label for="posted">Ngày hạch toán</label><input id="posted" class="field" type="text" value="20/07/2021" readonly></div>
                    <div class="row"><label for="docdate">Ngày chứng từ</label><input id="docdate" class="field" type="text" value="20/07/2021" readonly></div>
                    <div class="row"><label for="docno">Số chứng từ</label><input id="docno" class="field" type="text" value="LPT26/0721" readonly></div>
                </fieldset>
            </div>
            <div class="terms">
                <label for="term">Điều khoản TT</label><input id="term" class="field t1" type="text" readonly>
                <label for="days">Số ngày được nợ</label><input id="days" class="field t2" type="text" readonly><span class="unit">(ngày)</span>
                <label for="due">Hạn thanh toán</label><input id="due" class="field t3" type="text" value="20/07/2021" readonly>
                <button class="remind"><svg class="i16" viewBox="0 0 16 16"><path d="M2.500 2.500h13v13h-13z" fill="#fff" stroke="#445a8c"/><path d="M8 2h8v3H8z" fill="#e85a5a"/><path d="M5 9.500h9M5 11.500h9" stroke="#9aa5bd" stroke-dasharray="1 1"/><circle cx="5" cy="4.500" r="4" fill="#fff" stroke="#5a7cae"/><path d="M5 2v3h2" fill="none" stroke="#333"/></svg>Thêm nhắc việc...</button>
            </div>
            <div class="detail-head">
                <div class="detail-tabs">
                    <button><u>1</u>. Hàng tiền</button><button><u>2</u>. Thuế</button><button class="active"><u>3</u>. Thống kê</button><button><u>4</u>. Chi phí</button>
                </div>
                <div class="currency">
                    <label for="cur">Loại tiền</label><input id="cur" class="field c1" type="text" value="VND" readonly>
                    <label for="rate">Tỷ giá</label><input id="rate" class="field c2" type="text" value="1,00" readonly>
                </div>
            </div>
            <div class="grid">
                <table>
                    <colgroup><col class="k100"><col class="k210"><col class="k105"><col class="k105"><col class="k110"><col class="k110"><col class="k120"><col class="k105"><col></colgroup>
                    <thead>
                        <tr>
                            <th class="frozen"><div><span>Mã hàng</span><svg><use href="#pin"/></svg></div></th>
                            <th><div><span>Tên hàng</span><svg><use href="#pinside"/></svg></div></th>
                            <th></th><th></th><th></th>
                            <th><div><span></span><svg><use href="#pinside"/></svg></div></th>
                            <th><div><span>Đơn đặt hàng</span><svg><use href="#pinside"/></svg></div></th>
                            <th><div><span>Hợp đồng mua</span><svg><use href="#pinside"/></svg></div></th>
                            <th class="cut">Hợp</th>
                        </tr>
                    </thead>
                    <tbody>
                        <tr><td>SPP0006</td><td>Thực phẩm - Food for kitchen</td><td>501</td><td></td><td></td><td></td><td></td><td></td><td></td></tr>
                        <tr><td>SPP0006</td><td>Thực phẩm - Food for kitchen</td><td>501</td><td></td><td></td><td></td><td></td><td></td><td></td></tr>
                        <tr><td>SPP0006</td><td>Thực phẩm - Food for kitchen</td><td>501</td><td></td><td></td><td></td><td></td><td></td><td></td></tr>
                        <tr><td>SPP0006</td><td>Thực phẩm - Food for kitchen</td><td>501</td><td></td><td></td><td></td><td></td><td></td><td></td></tr>
                        <tr><td>SPP0006</td><td>Thực phẩm - Food for kitchen</td><td>501</td><td></td><td></td><td></td><td></td><td></td><td></td></tr>
                        <tr><td>SPP0006</td><td>Thực phẩm - Food for kitchen</td><td>501</td><td></td><td></td><td></td><td></td><td></td><td></td></tr>
                        <tr><td>SPP0006</td><td>Thực phẩm - Food for kitchen</td><td>501</td><td></td><td></td><td></td><td></td><td></td><td></td></tr>
                        <tr><td>SPP0006</td><td>Thực phẩm - Food for teaching Summer</td><td>6038</td><td></td><td></td><td></td><td></td><td></td><td></td></tr>
                        <tr><td></td><td></td><td></td><td></td><td></td><td></td><td></td><td></td><td></td></tr>
                        <tr class="half"><td></td><td></td><td></td><td></td><td></td><td></td><td></td><td></td><td></td></tr>
                    </tbody>
                    <tfoot>
                        <tr><td>Số dòng = 8</td><td colspan="8"></td></tr>
                    </tfoot>
                </table>
                <div class="scroll">
                    <svg class="i10" viewBox="0 0 10 10"><path d="M6 1v8L3 5z"/></svg>
                    <span class="track"></span>
                    <svg class="i10" viewBox="0 0 10 10"><path d="M4 1v8l3-4z"/></svg>
                </div>
            </div>
            <div class="summary">
                <div class="actions">
                    <button disabled>Phân bổ chiết khấu...</button>
                    <button>Xem công nợ</button>
                </div>
                <dl class="totals">
                    <dt>Tổng tiền hàng</dt><dd>843.849</dd><dt>Tiền thuế GTGT</dt><dd>76.151</dd>
                    <dt>Tiền chiết khấu</dt><dd>0</dd><dt>Chi phí mua hàng</dt><dd>0</dd>
                    <dt>Tổng tiền thanh toán</dt><dd>920.000</dd><dt>Tổng giá trị</dt><dd>920.000</dd>
                </dl>
            </div>
        </div>
        <div class="hintbar">F9 - Thêm nhanh, F3 - Tìm nhanh, Ctrl+F2 - Xem số tồn
            <svg viewBox="0 0 12 12"><path d="M9 1h2v2H9zM9 5h2v2H9zM9 9h2v2H9zM5 5h2v2H5zM5 9h2v2H5zM1 9h2v2H1z" fill="#5d6b98"/></svg>
        </div>
    </div>

    <!-- error message -->
    <div class="dialog" role="alertdialog" aria-label="MISA SME.NET 2021">
        <div class="dialog-title">MISA SME.NET 2021 <button aria-label="Đóng"><svg class="i10" viewBox="0 0 10 10"><path d="M0 0l10 10M10 0L0 10" stroke="#000"/></svg></button></div>
        <div class="dialog-body">
            <svg><use href="#warning"/></svg>
            <p>A transport-level error has occurred when receiving results<br>from the server. (provider: Session Provider, error: 19 - Physical<br>connection is not usable)</p>
        </div>
        <div class="dialog-foot"><button>OK</button></div>
    </div>

    <!-- reminders -->
    <div class="reminders">
        <button class="close" aria-label="Đóng">X</button>
        <div class="reminders-head"><h3>Nhắc nhở</h3><a href="#">Thiết lập nhắc nhở</a></div>
        <ul>
            <li><svg><use href="#tax"/></svg>Kê khai nộp thuế TNCN quý 1</li>
            <li><svg><use href="#tax"/></svg>Quyết toán thuế TNCN năm 2020</li>
            <li class="hover"><svg><use href="#tax"/></svg>Quyết toán thuế TNDN năm 2020</li>
        </ul>
    </div>
</body>
</html>
```
FILE: styles.css
```
*{
    padding: 0;
    margin: 0;
    box-sizing: border-box;
}

:root {
    --bg: #dae1fb;
    --bar: #c2cef9;
    --line: #8c9fde;
    --dark: #5d6b98;
    --orange: #f5cb82;
    --cream: #fae5c0;
    --page: #f2f4ff;
    --field: #efefef;
    --ui: "Open Sans", "Noto Sans", sans-serif;
}

html, body {
    height: 100%;
}

body {
    display: flex;
    flex-direction: column;
    position: relative;
    overflow: hidden;
    background-color: var(--bg);
    color: #000;
    font-family: "Liberation Sans", Arial, sans-serif;
    font-size: 11px;
    line-height: 14px;
    white-space: nowrap;
}

a {
    color: inherit;
    text-decoration: none;
}

button, input, select {
    font: inherit;
    color: inherit;
    border: none;
    background: none;
    border-radius: 0;
}

ul {
    list-style: none;
}

svg {
    flex: none;
    display: block;
}

.sprite { position: absolute; width: 0; height: 0; }
.i8 { width: 8px; height: 8px; }
.i10 { width: 10px; height: 10px; }
.i12 { width: 12px; height: 12px; }
.i14 { width: 14px; height: 14px; }
.i16 { width: 16px; height: 16px; }

/* top menu */
.topbar {
    border-bottom: 1px solid var(--line);
    font-size: 12px;
}

.toprow {
    display: flex;
    align-items: center;
    height: 32px;
    padding-left: 4px;
}

.logo { width: 24px; height: 24px; }

.menu {
    display: flex;
    gap: 15px;
    width: 383px;
    margin-left: 11px;
}

.searchbox {
    display: flex;
    align-items: center;
    height: 21px;
    background-color: #fff;
    border: 1px solid var(--line);
}

.searchbox input {
    flex: 1;
    min-width: 0;
    padding-left: 4px;
    font-style: italic;
    font-size: 11px;
    outline: none;
}

.searchbox input::placeholder { color: #777; }
.main-search { width: 300px; padding-right: 4px; }

.help-links {
    display: flex;
    align-items: center;
    gap: 8px;
    height: 24px;
    margin-left: auto;
    font-size: 11px;
    align-self: flex-start;
}

.help-links .i8 { margin: 0 1px 0 1px; }
.headset + a { margin-left: -6px; }

.window-buttons {
    display: flex;
    align-self: flex-start;
    height: 24px;
    margin-left: 5px;
}

.window-buttons button {
    display: grid;
    place-items: center;
    width: 41px;
}

.second { height: 31px; padding-bottom: 2px; }
.working { margin-left: 4px; }
.company { width: 269px; margin-left: 6px; }

.quick {
    display: flex;
    align-items: center;
    gap: 4px;
    margin-right: 22px;
}

.user {
    display: flex;
    align-items: center;
    gap: 9px;
    margin-left: auto;
    padding-right: 10px;
    font-size: 11px;
}

.user span { margin-right: 3px; }
.user .i16:first-child { margin-right: 14px; }

/* left side */
.workspace {
    flex: 1;
    display: flex;
    min-height: 0;
}

.sidebar {
    display: flex;
    flex-direction: column;
    width: 179px;
    border-left: 1px solid var(--line);
    border-right: 2px solid var(--line);
    background-color: #fff;
}

.side-title {
    display: flex;
    justify-content: space-between;
    align-items: center;
    height: 25px;
    padding: 0 6px 0 5px;
    border-bottom: 1px solid var(--line);
    background-color: var(--bg);
    font-family: var(--ui);
    font-size: 16px;
}

.side-title button { color: #4a61a8; font-weight: normal; }

.side-links {
    flex: 1;
    padding-top: 5px;
    overflow: hidden;
}

.side-links a {
    display: flex;
    align-items: center;
    gap: 5px;
    height: 23px;
    padding-left: 4px;
}

.group + .group {
    margin-left: 2px;
    padding-top: 5px;
    border-top: 1px solid #dcdcdc;
}

.group + .group a { padding-left: 2px; }

.splitter {
    height: 8px;
    padding: 2px 0;
    border-top: 1px solid var(--line);
    border-bottom: 1px solid var(--line);
    background-color: var(--bg);
}

.splitter span {
    display: block;
    width: 36px;
    margin: 0 auto;
    border-top: 2px dotted #6b86c8;
}

.modules a {
    display: flex;
    align-items: center;
    gap: 5px;
    height: 32px;
    padding-left: 3px;
    border-bottom: 1px solid #b4c1ee;
    background-color: var(--bg);
    font-family: var(--ui);
    font-weight: bold;
}

.modules svg { width: 24px; height: 22px; }

.modules .active {
    background-color: var(--cream);
    border-bottom-color: var(--line);
}

.module-more {
    display: flex;
    align-items: center;
    justify-content: flex-end;
    gap: 6px;
    height: 30px;
    padding-right: 2px;
    background-color: var(--bg);
}

.module-more svg { width: 14px; height: 14px; }

/* report list */
.reports {
    flex: 1;
    display: flex;
    flex-direction: column;
    min-width: 0;
    border-right: 1px solid var(--line);
}

.page-title {
    height: 30px;
    padding-left: 2px;
    font-family: var(--ui);
    font-size: 16px;
    line-height: 30px;
}

.tabbar {
    display: flex;
    align-items: center;
    height: 26px;
    padding-right: 10px;
    border-bottom: 2px solid var(--orange);
    background-color: var(--dark);
}

.tab {
    align-self: stretch;
    padding: 0 12px;
    border: 1px solid var(--line);
    border-bottom: none;
    color: #fff;
}

.tab.active {
    padding: 0 11px;
    background-color: var(--orange);
    color: #000;
    font-weight: bold;
}

.report-search {
    width: 224px;
    margin-left: auto;
    padding-right: 5px;
}

.lang {
    appearance: none;
    width: 99px;
    height: 21px;
    margin-left: 8px;
    padding-left: 4px;
    border: 1px solid var(--line);
    background-color: #fff;
    background-image: linear-gradient(45deg, transparent 50%, #000 50%), linear-gradient(-45deg, transparent 50%, #000 50%);
    background-position: right 8px center, right 4px center;
    background-size: 4px 4px;
    background-repeat: no-repeat;
}

.report-area {
    flex: 1;
    display: flex;
    min-height: 0;
    background-color: var(--page);
}

.categories {
    display: flex;
    flex-direction: column;
    width: 201px;
    padding-top: 9px;
    background-color: #fff;
}

.categories nav { flex: 1; }

.categories a {
    display: flex;
    align-items: center;
    gap: 9px;
    height: 29px;
    padding-left: 9px;
}

.categories a svg { width: 16px; height: 16px; }

.categories .active {
    background-color: var(--cream);
    font-weight: bold;
}

.customize {
    padding: 15px 25px 11px;
    border-top: 1px solid #c4c4c4;
}

.customize button {
    display: flex;
    align-items: center;
    width: 150px;
    height: 25px;
    padding: 0 12px 0 3px;
    border: 1px solid #adadad;
    background-color: #e1e1e1;
}

.customize span { flex: 1; }

.report-content {
    flex: 1;
    min-width: 0;
    padding: 8px 7px 0 8px;
}

.report-content h1 {
    height: 51px;
    padding-left: 4px;
    font-family: var(--ui);
    font-size: 23px;
    line-height: 30px;
}

.report-list {
    padding: 0 11px 0 10px;
    background-color: #fff;
    font-family: var(--ui);
}

.report-list li {
    display: flex;
    align-items: center;
    height: 50px;
    padding-top: 4px;
    border-bottom: 1px solid #dcdcdc;
}

.report-list li:first-child { height: 47px; padding-top: 2px; }
.report-list li:last-child { height: 53px; padding-top: 1px; border: none; }
.report-list svg { width: 16px; height: 16px; }
.report-list svg + svg { margin-left: 11px; }
.en { width: 1064px; }
.vi { flex: 1; }

/* status line */
.app-status {
    display: flex;
    align-items: center;
    gap: 4px;
    height: 24px;
    padding: 0 13px 0 3px;
    border-top: 1px solid var(--line);
    background-color: var(--bar);
}

.app-status svg { width: 14px; height: 14px; }
.server { width: 197px; }
.edition { margin-left: auto; }

/* windows taskbar */
.taskbar {
    display: flex;
    height: 40px;
    background: linear-gradient(90deg, #233740, #25383f 40%, #1e2c44 80%, #202b40);
    color: #fff;
    font-family: var(--ui);
}

.start {
    display: grid;
    place-items: center;
    width: 48px;
}

.task-search {
    display: flex;
    align-items: center;
    gap: 10px;
    width: 344px;
    padding-left: 11px;
    border: 1px solid #bbb;
    background-color: #f2f2f2;
    font-size: 14px;
}

.task-search svg { width: 18px; height: 18px; }
.task-search input { flex: 1; }
.task-search input::placeholder { color: #3c3c3c; }

.apps {
    display: flex;
}

.apps button {
    display: grid;
    place-items: center;
    width: 40px;
    margin: 0 4px 0 5px;
    border-bottom: 2px solid transparent;
}

.apps svg { width: 24px; height: 24px; }
.apps .open { border-bottom-color: #76b9ed; }

.apps .current {
    width: 48px;
    margin: 0 0 0 1px;
    background-color: #51616b;
}

.tray {
    display: flex;
    align-items: center;
    gap: 8px;
    margin-left: auto;
    padding-right: 13px;
    border-right: 1px solid #5a6478;
    margin-right: 4px;
}

.weather { width: 22px; height: 20px; }
.forecast { margin-right: 4px; font-size: 14px; }
.ime { font-size: 12px; }
.clock { width: 64px; font-size: 11px; line-height: 17px; text-align: center; }
.notice { width: 26px; height: 26px; }
.count { fill: #fff; font-size: 11px; }

/* voucher window */
.window {
    position: absolute;
    top: 136px;
    left: 453px;
    right: 454px;
    border: 1px solid var(--dark);
    background-color: var(--bg);
    box-shadow: 0 1px 6px rgba(80, 90, 130, .35);
}

.titlebar, .toolbar {
    font-family: Roboto, "Open Sans", sans-serif;
    font-size: 12px;
}

.titlebar {
    display: flex;
    align-items: center;
    height: 30px;
    padding: 0 5px 0 2px;
    background-color: #8690b3;
}

.titlebar span { flex: 1; margin-left: 4px; }
.titlebar button { margin-left: 11px; }

.toolbar {
    display: flex;
    height: 47px;
    padding-top: 4px;
    background-color: var(--bar);
}

.toolbar button {
    display: flex;
    flex-direction: column;
    align-items: center;
    gap: 7px;
    padding: 0 8px;
}

.toolbar button:first-child { padding-left: 7px; }
.toolbar button svg { width: 16px; height: 16px; }
.toolbar button:disabled { color: #8d8d93; }
.drop { width: 8px; height: 8px; margin: 17px 3px 0 -2px; }

.sep {
    width: 2px;
    height: 25px;
    margin: 6px 3px 0 0;
    background-color: #82a7e0;
}

.voucher {
    padding: 13px 8px 0;
}

.headline, .payline, .row, .terms {
    display: flex;
    align-items: center;
}

.headline h2 {
    width: 224px;
    padding-left: 3px;
    font-family: var(--ui);
    font-size: 16px;
    line-height: 21px;
}

.field {
    min-width: 0;
    height: 21px;
    padding: 0 3px;
    border: 1px solid var(--line);
    background-color: var(--field);
    outline: none;
}

.kind { width: 256px; }
.w136 { width: 136px; margin-right: 6px; }
.w190 { width: 190px; }
.grow { flex: 1; }
.row .field { padding-left: 4px; }

.payline { margin-top: 4px; height: 24px; }

.radio {
    display: flex;
    align-items: center;
    gap: 5px;
    width: 119px;
}

.radio + .radio { width: 105px; }

.radio input {
    appearance: none;
    width: 13px;
    height: 13px;
    border: 1px solid #bbb;
    border-radius: 50%;
    background-color: #fff;
}

.radio input:checked { background: radial-gradient(#c4c4c4 0 3px, #fff 4px); }

.stamp {
    width: 144px;
    margin-left: auto;
    margin-right: 2px;
    border: 2px solid #c00000;
    color: #c00000;
    font-size: 12px;
    line-height: 19px;
    text-align: center;
}

.panel-tabs {
    display: flex;
    justify-content: space-between;
    align-items: flex-end;
    margin-top: 2px;
}

.tab-debit {
    width: 107px;
    height: 20px;
    border: 1px solid var(--line);
    border-bottom: none;
    background-color: var(--orange);
    font-weight: bold;
}

.check {
    display: flex;
    align-items: center;
    gap: 4px;
    height: 23px;
    padding: 0 6px 0 3px;
    border: 1px solid var(--line);
    border-bottom: none;
    background-color: var(--bar);
}

.panel {
    display: flex;
    gap: 12px;
    padding: 9px 9px 8px;
    border: 1px solid var(--line);
}

fieldset {
    border: 1px solid var(--line);
    padding: 9px 8px 4px;
    min-width: 0;
}

legend {
    margin-left: -4px;
    padding: 0 3px;
    font-weight: bold;
}

.general { flex: 1; }
.docinfo { width: 206px; }
.row { height: 24px; }
.general label, .lbl { width: 86px; }
.docinfo label { width: 86px; }
.docinfo .field { flex: 1; }
.second-field { margin-left: 7px; }

.zoom {
    display: grid;
    place-items: center;
    width: 23px;
    height: 23px;
    margin-left: auto;
    border: 1px solid var(--line);
    background-color: #dedede;
}

.terms { margin-top: 7px; height: 22px; padding-left: 3px; }
.t1 { width: 112px; margin: 0 11px 0 8px; }
.t2 { width: 64px; margin: 0 2px 0 4px; }
.t3 { width: 88px; margin: 0 7px 0 11px; }
.unit { margin-right: 17px; }

.remind {
    display: flex;
    align-items: center;
    gap: 3px;
    width: 118px;
    height: 23px;
    padding-left: 4px;
    border: 1px solid var(--line);
    background-color: var(--bar);
}

.detail-head {
    display: flex;
    justify-content: space-between;
    align-items: flex-end;
    margin-top: 11px;
}

.detail-tabs { display: flex; }

.detail-tabs button {
    height: 19px;
    padding: 0 12px;
    border: 1px solid var(--line);
    border-bottom: none;
    border-right: none;
}

.detail-tabs button:first-child { padding: 0 13px; }

.detail-tabs .active {
    background-color: var(--orange);
    font-weight: bold;
}

.currency {
    display: flex;
    align-items: center;
    padding-bottom: 6px;
}

.c1 { width: 59px; margin: 0 6px 0 14px; padding-left: 5px; }
.c2 { width: 80px; margin-left: 8px; text-align: right; }

.grid {
    border: 1px solid var(--line);
    background-color: #fff;
    overflow: hidden;
}

table {
    width: 100%;
    table-layout: fixed;
    border-collapse: separate;
    border-spacing: 0;
}

.k100 { width: 100px; }
.k105 { width: 105px; }
.k110 { width: 110px; }
.k120 { width: 120px; }
.k210 { width: 210px; }

th {
    height: 20px;
    padding-right: 1px;
    border-right: 1px solid var(--line);
    border-bottom: 1px solid var(--line);
    background-color: var(--bar);
    font-weight: normal;
}

th div {
    display: flex;
    align-items: center;
}

th span { flex: 1; }
th svg { width: 10px; height: 10px; }

.cut {
    padding-left: 13px;
    overflow: hidden;
    text-align: left;
}

td {
    height: 22px;
    padding-left: 5px;
    border-right: 1px dotted #ccc;
    border-bottom: 1px dotted #ccc;
}

td:first-child, .frozen { border-right: 1px solid #777; }
td:first-child { padding-left: 6px; }
.half td { height: 12px; border-bottom: none; }
td:last-child, th:last-child { border-right: none; }

tfoot td {
    height: 23px;
    border-top: 1px solid #ddd;
    border-bottom: 1px solid #ddd;
    background-color: var(--field);
}

tfoot td:first-child { padding-left: 4px; }

.scroll {
    display: flex;
    align-items: center;
    justify-content: space-between;
    height: 17px;
    padding: 0 4px;
    background-color: var(--bar);
}

.track {
    align-self: stretch;
    width: 177px;
    margin: 0 3px 0 auto;
    background-color: var(--field);
}

.summary {
    display: flex;
    padding: 9px 0 13px;
}

.actions {
    display: flex;
    flex-direction: column;
    gap: 4px;
    width: 278px;
}

.actions button {
    width: 118px;
    height: 23px;
    border: 1px solid var(--line);
    background-color: var(--bar);
}

.actions button:disabled {
    background-color: #e3e3e6;
    color: #868686;
}

.totals {
    flex: 1;
    display: grid;
    grid-template-columns: 160px 216px 160px 1fr;
    line-height: 26px;
    margin-top: -5px;
}

.totals dt { font-weight: bold; }
.totals dd { text-align: right; }
.totals dt:nth-of-type(even) { padding-left: 22px; }

.hintbar {
    display: flex;
    justify-content: space-between;
    align-items: center;
    height: 24px;
    padding-left: 4px;
    background-color: var(--bar);
}

.hintbar svg { width: 12px; height: 12px; align-self: flex-end; }

/* error dialog */
.dialog {
    position: absolute;
    top: 468px;
    left: 762px;
    width: 412px;
    border: 1px solid #666;
    background-color: #fff;
    box-shadow: 0 4px 16px rgba(0, 0, 0, .4);
    font-family: var(--ui);
}

.dialog-title {
    display: flex;
    align-items: center;
    justify-content: space-between;
    height: 29px;
    padding: 0 10px 0 8px;
}

.dialog-body {
    display: flex;
    gap: 8px;
    height: 86px;
    padding: 24px 0 0 21px;
}

.dialog-body svg { width: 33px; height: 33px; }
.dialog-body p { line-height: 13px; }

.dialog-foot {
    display: flex;
    justify-content: flex-end;
    padding: 10px 16px 11px;
    background-color: #f0f0f0;
}

.dialog-foot button {
    width: 73px;
    height: 21px;
    border: 2px solid #0078d7;
    background-color: #e1e1e1;
}

/* reminders */
.reminders {
    position: absolute;
    right: 10px;
    bottom: 70px;
    width: 350px;
    height: 199px;
    padding: 0 14px 0 12px;
    border: 1px solid #bbb;
    background-color: #fff;
}

.reminders-head {
    display: flex;
    align-items: center;
    justify-content: space-between;
    height: 39px;
    padding: 2px 4px 0 0;
}

.reminders h3 { font-size: 15px; }
.reminders a { color: #0a78d7; }

.close {
    position: absolute;
    top: 2px;
    right: 5px;
    font-size: 12px;
}

.reminders li {
    display: flex;
    align-items: center;
    gap: 13px;
    height: 52px;
    margin-left: 2px;
    padding-left: 10px;
    border-bottom: 1px solid #dcdcdc;
}

.reminders li svg { width: 18px; height: 20px; }
.reminders .hover { background-color: #f4f4f4; }
```
